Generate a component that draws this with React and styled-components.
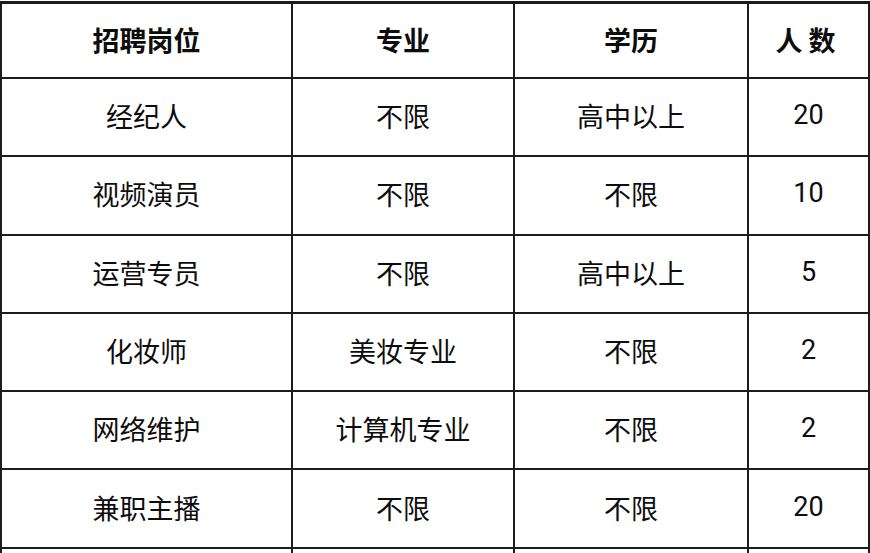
import React from "react";
import styled, { createGlobalStyle } from "styled-components";

const Global = createGlobalStyle`
  html, body { margin: 0; padding: 0; background: #ffffff; }
  body { font-family: "Noto Sans CJK SC", "Noto Sans", sans-serif; color: #0d0d0d; }
`;

const Page = styled.div`
  width: 870px;
  height: 553px;
  overflow: hidden;
  background: #fff;
`;

const Table = styled.table`
  width: 868px;
  border-collapse: collapse;
  table-layout: fixed;
  margin-top: 1px;
`;

const Col = styled.col`
  width: ${(p) => p.$w}px;
`;

const HeadCell = styled.th`
  height: 70px;
  border: 2px solid #1c1c1c;
  border-top-width: 3px;
  font-size: 27px;
  font-weight: 700;
  text-align: center;
  vertical-align: middle;
  padding: 0 0 3px;
  letter-spacing: ${(p) => (p.$spaced ? "6px" : "0")};
  line-height: 1;
`;

const Cell = styled.td`
  height: 73.3px;
  border: 2px solid #1c1c1c;
  font-size: 27px;
  font-weight: 400;
  text-align: center;
  vertical-align: middle;
  padding: 0 0 3px;
  line-height: 1;
  font-family: ${(p) => (p.$num ? '"Roboto", "Noto Sans", sans-serif' : 'inherit')};
`;

const rows = [
  ["经纪人", "不限", "高中以上", "20"],
  ["视频演员", "不限", "不限", "10"],
  ["运营专员", "不限", "高中以上", "5"],
  ["化妆师", "美妆专业", "不限", "2"],
  ["网络维护", "计算机专业", "不限", "2"],
  ["兼职主播", "不限", "不限", "20"],
  ["", "", "", ""],
];

export default function App() {
  return (
    <Page>
      <Global />
      <Table>
        <colgroup>
          <Col $w={291} />
          <Col $w={222} />
          <Col $w={234} />
          <Col $w={121} />
        </colgroup>
        <thead>
          <tr>
            <HeadCell>招聘岗位</HeadCell>
            <HeadCell>专业</HeadCell>
            <HeadCell>学历</HeadCell>
            <HeadCell $spaced>人数</HeadCell>
          </tr>
        </thead>
        <tbody>
          {rows.map((r, i) => (
            <tr key={i}>
              <Cell>{r[0]}</Cell>
              <Cell>{r[1]}</Cell>
              <Cell>{r[2]}</Cell>
              <Cell $num>{r[3]}</Cell>
            </tr>
          ))}
        </tbody>
      </Table>
    </Page>
  );
}
